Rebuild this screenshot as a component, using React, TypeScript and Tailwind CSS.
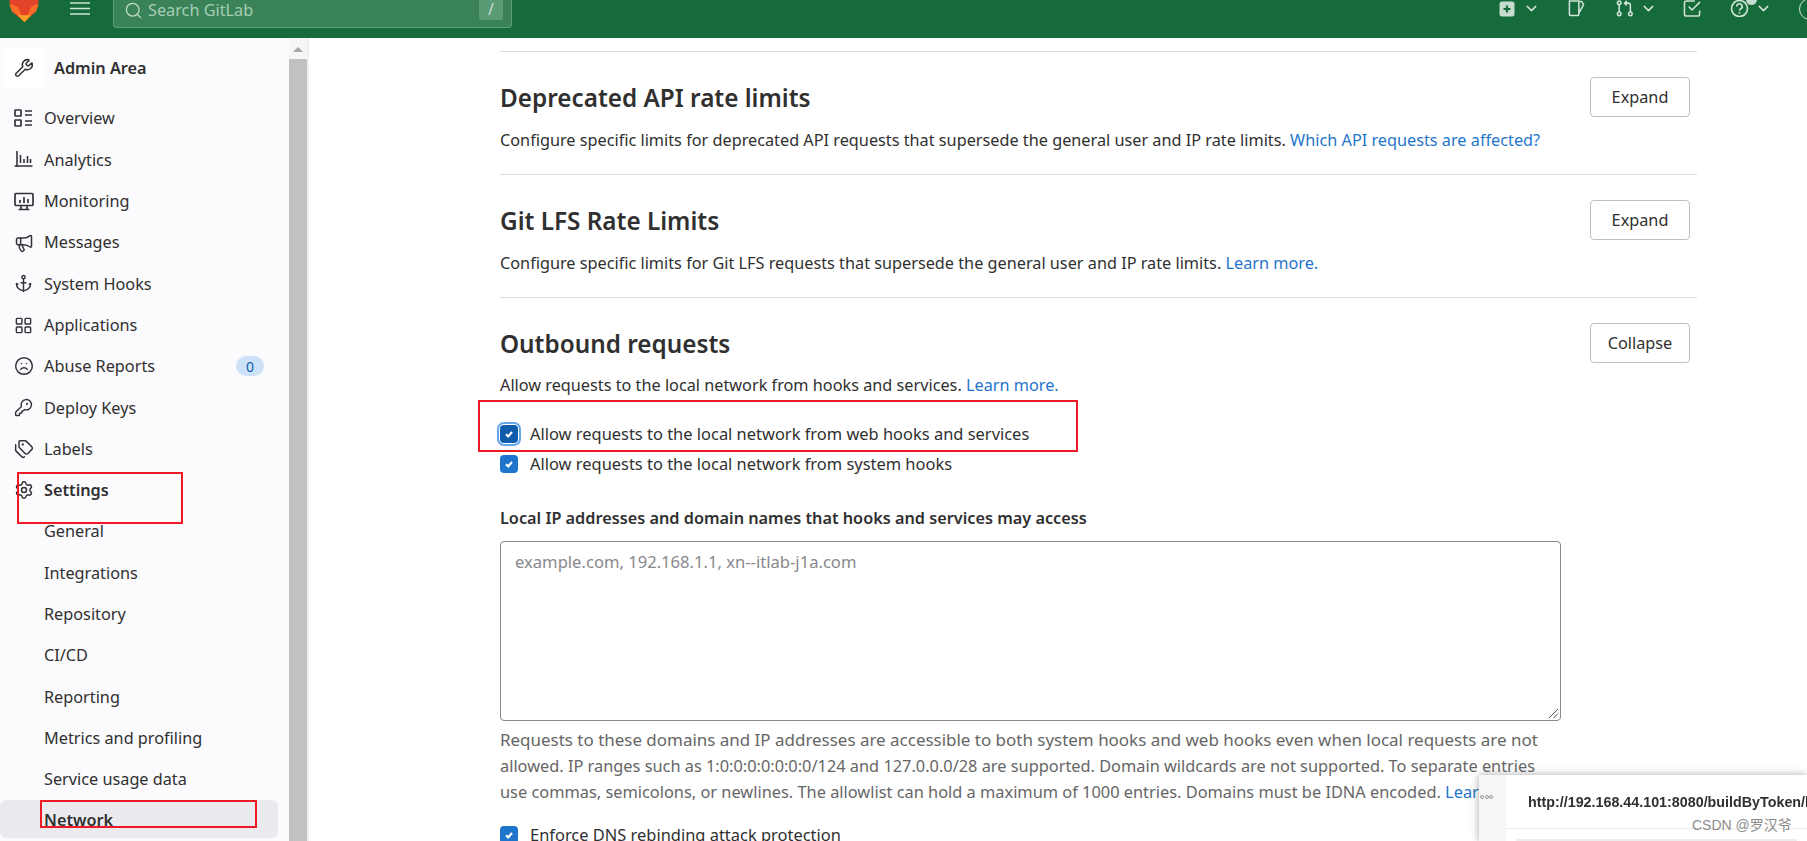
import { Anchor, ChevronDown, Frown, KeyRound, LayoutGrid, Megaphone, Search, Settings, Tags, Wrench } from "lucide-react";
import type { ReactNode } from "react";

function OverviewIcon() {
  return (
    <svg width="19" height="19" viewBox="0 0 19 19" fill="none" stroke="currentColor" strokeWidth="1.7">
      <rect x="1" y="1" width="6" height="6" rx="0.5" />
      <rect x="1" y="11" width="6" height="6" rx="0.5" />
      <path d="M11 2h7M11 6h7M11 12h7M11 16h7" />
    </svg>
  );
}

function AnalyticsIcon() {
  return (
    <svg width="19" height="19" viewBox="0 0 19 19" fill="none" stroke="currentColor" strokeWidth="1.6">
      <path d="M3 1v16M0.5 16h18M6.500 5v8M10 9v4M13.500 6v7M16.500 9v4" />
    </svg>
  );
}

function MonitoringIcon() {
  return (
    <svg width="20" height="19" viewBox="0 0 20 19" fill="none" stroke="currentColor" strokeWidth="1.7">
      <rect x="1" y="1.500" width="18" height="12" rx="1" />
      <path d="M6 8v3M10 5v6M14 7v4M7 14v3M13 14v3M4.500 17.500h11" />
    </svg>
  );
}

const mainNav: { label: string; icon: ReactNode }[] = [
  { label: "Overview", icon: <OverviewIcon /> },
  { label: "Analytics", icon: <AnalyticsIcon /> },
  { label: "Monitoring", icon: <MonitoringIcon /> },
  { label: "Messages", icon: <Megaphone size={20} strokeWidth={1.8} /> },
  { label: "System Hooks", icon: <Anchor size={19} strokeWidth={1.8} /> },
  { label: "Applications", icon: <LayoutGrid size={19} strokeWidth={1.8} /> },
  { label: "Abuse Reports", icon: <Frown size={20} strokeWidth={1.8} /> },
  { label: "Deploy Keys", icon: <KeyRound size={19} strokeWidth={1.8} /> },
  { label: "Labels", icon: <Tags size={20} strokeWidth={1.8} /> },
];

const settingsNav = ["General", "Integrations", "Repository", "CI/CD", "Reporting", "Metrics and profiling", "Service usage data"];

function NavRow({ label, icon, bold, badge }: { label: string; icon?: ReactNode; bold?: boolean; badge?: string }) {
  return (
    <div className="flex h-[41.3px] items-center pl-[14px] pr-[14px] text-[#303030]">
      <span className="flex w-[30px] shrink-0 text-[#333238]">{icon}</span>
      <span className={bold ? "font-semibold" : ""}>{label}</span>
      {badge && (
        <span className="ml-auto flex h-[20px] w-[28px] items-center justify-center rounded-full bg-[#cbe2f9] text-[14px] text-[#0b5cad]">
          {badge}
        </span>
      )}
    </div>
  );
}

function Section({ title, text, link, action }: { title: string; text: string; link: string; action: string }) {
  return (
    <div className="flex h-[123px] items-start justify-between border-t border-[#dcdcde] pr-[7px] pt-[25px]">
      <div>
        <h2 className="text-[24.3px] leading-[42px] font-semibold text-[#303030]">{title}</h2>
        <p className="mt-[8px] leading-[26px] text-[#303030]">
          {text} <a className="text-[#1f75cb]">{link}</a>
        </p>
      </div>
      <button className="h-[40px] w-[100px] rounded-[4px] border border-[#bfbfc3] bg-white text-[#303030]">{action}</button>
    </div>
  );
}

function Check({ label, focused }: { label: string; focused?: boolean }) {
  return (
    <label className="flex h-[30px] items-center gap-[12px] text-[16.45px] text-[#303030]">
      <span
        className={
          focused
            ? "flex h-[18px] w-[18px] items-center justify-center rounded-[4px] bg-[#0f5cad] ring-2 ring-[#63a6e9] ring-offset-1"
            : "flex h-[18px] w-[18px] items-center justify-center rounded-[4px] bg-[#1f75cb]"
        }
      >
        <svg width="10" height="10" viewBox="0 0 10 10" fill="none" stroke="white" strokeWidth="2.2">
          <path d="M2 5.200l2.200 2.200L8 3" />
        </svg>
      </span>
      {label}
    </label>
  );
}

function TopIcons() {
  return (
    <div className="ml-[987px] flex h-[17px] shrink-0 items-center self-start text-[#d1e4d8]">
      <svg width="16" height="16" viewBox="0 0 16 16" className="shrink-0">
        <rect x="0.500" y="0.500" width="15" height="15" rx="2.500" fill="#c5dccf" />
        <path d="M8 4.500v7M4.500 8h7" stroke="#166b3b" strokeWidth="2.200" />
      </svg>
      <ChevronDown size={17} strokeWidth={2} className="ml-[8px] shrink-0" />
      <svg width="19" height="17" viewBox="0 0 19 18" fill="none" stroke="currentColor" strokeWidth="1.6" className="ml-[27px] shrink-0">
        <path d="M2 1h10v14a1.500 1.500 0 0 1-1.500 1.500h-7A1.500 1.500 0 0 1 2 15zM12 1.500h3l2 3.500-5 9" />
      </svg>
      <svg width="18" height="17" viewBox="0 0 20 19" fill="none" stroke="currentColor" strokeWidth="1.7" className="ml-[30px] shrink-0">
        <circle cx="3.500" cy="3" r="2" />
        <circle cx="3.500" cy="15.500" r="2" />
        <circle cx="16" cy="15.500" r="2" />
        <path d="M3.500 5v8.500M16 13.500V6a2.500 2.500 0 0 0-2.500-2.500H10M12 1L9.500 3.500 12 6" />
      </svg>
      <ChevronDown size={17} strokeWidth={2} className="ml-[6px] shrink-0" />
      <svg width="19" height="17" viewBox="0 0 19 18" fill="none" stroke="currentColor" strokeWidth="1.6" className="ml-[26px] shrink-0">
        <path d="M12 1H3a2 2 0 0 0-2 2v12a2 2 0 0 0 2 2h12a2 2 0 0 0 2-2v-4M5.500 7l3.500 3.500L17.500 2" />
      </svg>
      <span className="relative ml-[27px] flex shrink-0">
        <svg width="21" height="17" viewBox="0 2 21 17" fill="none" stroke="currentColor" strokeWidth="1.6">
          <circle cx="10.500" cy="10.500" r="8" />
          <path d="M7.800 8.500a2.700 2.700 0 1 1 4 2.300c-.9.500-1.300 1-1.300 1.900M10.500 14v1.500" />
        </svg>
        <span className="absolute right-[-7px] top-[-6px] h-[11px] w-[11px] rounded-full bg-[#c5dccf]" />
      </span>
      <ChevronDown size={17} strokeWidth={2} className="ml-[5px] shrink-0" />
      <span className="ml-[27px] h-[22px] w-[22px] shrink-0 rounded-full border border-[#d1e4d8]" />
    </div>
  );
}

function Popup() {
  return (
    <div className="absolute bottom-0 left-[1479px] right-0 flex h-[66px] overflow-hidden bg-white shadow-[0_0_8px_rgba(0,0,0,0.35)]">
      <div className="w-[27px] bg-[#f6f6f6] pl-[1px] pt-[20px]">
        <div className="flex gap-[0.5px]">
          <span className="h-[4px] w-[4px] rounded-full border border-[#999]" />
          <span className="h-[4px] w-[4px] rounded-full border border-[#999]" />
          <span className="h-[4px] w-[4px] rounded-full border border-[#999]" />
        </div>
      </div>
      <div className="min-w-0 flex-1">
        <div className="h-[54px] overflow-hidden whitespace-nowrap border-b border-[#ededed] pl-[22px] pt-[17px] font-['Liberation_Sans',sans-serif] text-[14.3px] font-bold text-[#303030] blur-[0.4px]">
          http://192.168.44.101:8080/buildByToken/build
        </div>
        <div className="mx-[10px] mt-[10px] h-[6px] bg-[#ededed]" />
      </div>
      <span className="absolute left-[213px] top-[40px] font-['Liberation_Sans','Noto_Sans_CJK_SC',sans-serif] text-[14px] text-[#8c8c8c]">
        CSDN @罗汉爷
      </span>
    </div>
  );
}

export default function App() {
  return (
    <div className="relative flex h-[841px] w-[1807px] flex-col overflow-hidden bg-white font-['Noto_Sans',sans-serif] text-[16.25px]">
      <header className="flex h-[38px] shrink-0 overflow-hidden bg-[#166b3b] pl-[9px]">
        <svg width="31" height="23" viewBox="0 0 32 24" className="shrink-0">
          <path d="M0 0h31l-3 12-12 11L3 12z" fill="#e24329" />
          <path d="M0 4l3 8 6 4 7 7-7-16z" fill="#fc6d26" />
          <path d="M31 4l-3 8-6 4-6 7 7-16z" fill="#fc6d26" />
          <path d="M9 16h14l-7 7z" fill="#fca326" />
        </svg>
        <svg width="20" height="14" viewBox="0 0 20 14" className="ml-[30px] mt-[2px] shrink-0" stroke="#d1e4d8" strokeWidth="1.500">
          <path d="M0 1h20M0 6.500h20M0 12h20" />
        </svg>
        <div className="ml-[23px] flex h-[28px] w-[399px] shrink-0 items-center rounded-b-[4px] border border-t-0 border-[#5f9d7a] bg-[#3a8358] pb-[6px] pl-[10px] pr-[8px] text-[#a5cdb5]">
          <Search size={19} strokeWidth={1.6} className="mr-[5px] text-[#c3ddce]" />
          <span>Search GitLab</span>
          <span className="ml-auto mb-[3px] flex h-[22px] w-[24px] items-center justify-center rounded-b-[3px] bg-[#5a9a75] text-[16px] text-[#c3ddce]">/</span>
        </div>
        <TopIcons />
      </header>

      <div className="flex min-h-0 flex-1">
        <aside className="flex w-[289px] shrink-0 flex-col overflow-hidden bg-[#fbfafd] pr-[11px]">
          <div className="flex h-[60px] shrink-0 items-center pl-[4px] font-semibold text-[#303030]">
            <span className="mr-[10px] flex h-[40px] w-[40px] items-center justify-center rounded-[6px] bg-white text-[#333238]">
              <Wrench size={20} strokeWidth={1.8} />
            </span>
            Admin Area
          </div>
          <nav>
            {mainNav.map((item) => (
              <NavRow key={item.label} label={item.label} icon={item.icon} badge={item.label === "Abuse Reports" ? "0" : undefined} />
            ))}
            <NavRow label="Settings" icon={<Settings size={20} strokeWidth={1.8} />} bold />
            {settingsNav.map((label) => (
              <NavRow key={label} label={label} />
            ))}
            <div className="flex h-[38px] items-center rounded-[6px] bg-[#ebeaef] pl-[44px] pt-[3px] font-semibold text-[#303030]">Network</div>
          </nav>
        </aside>

        <div className="flex w-[20px] shrink-0 flex-col items-center border-r-2 border-[#f0f0f0] bg-[#f6f6f6]">
          <span className="mt-[9px] h-0 w-0 border-x-[5px] border-b-[5px] border-x-transparent border-b-[#a8a8a8]" />
          <span className="mt-[7px] w-full flex-1 bg-[#c1c1c1]" />
        </div>

        <main className="min-w-0 flex-1 pl-[191px] pr-[110px] pt-[13px]">
          <Section
            title="Deprecated API rate limits"
            text="Configure specific limits for deprecated API requests that supersede the general user and IP rate limits."
            link="Which API requests are affected?"
            action="Expand"
          />
          <Section
            title="Git LFS Rate Limits"
            text="Configure specific limits for Git LFS requests that supersede the general user and IP rate limits."
            link="Learn more."
            action="Expand"
          />
          <div className="flex items-start justify-between border-t border-[#dcdcde] pr-[7px] pt-[25px]">
            <div className="min-w-0">
              <h2 className="text-[24.3px] leading-[42px] font-semibold text-[#303030]">Outbound requests</h2>
              <p className="mt-[7px] leading-[26px] text-[#303030]">
                Allow requests to the local network from hooks and services. <a className="text-[#1f75cb]">Learn more.</a>
              </p>
              <div className="mt-[21px]">
                <Check label="Allow requests to the local network from web hooks and services" focused />
                <Check label="Allow requests to the local network from system hooks" />
              </div>
              <div className="mt-[26px] font-semibold leading-[26px] text-[#303030]">Local IP addresses and domain names that hooks and services may access</div>
              <div className="relative mt-[10px] h-[180px] w-[1061px] rounded-[4px] border border-[#89888d] pl-[14px] pt-[8px] text-[16.6px] text-[#89888d]">
                example.com, 192.168.1.1, xn--itlab-j1a.com
                <svg width="11" height="11" viewBox="0 0 11 11" className="absolute bottom-[1px] right-[1px]" stroke="#555" fill="none">
                  <path d="M1 10l9-9M5.500 10l4.500-4.500" />
                </svg>
              </div>
              <p className="mt-[6px] w-[1061px] whitespace-nowrap text-[16.97px] leading-[26px] text-[#666666]">
                <span className="block">Requests to these domains and IP addresses are accessible to both system hooks and web hooks even when local requests are not</span>
                <span className="block text-[16.35px]">allowed. IP ranges such as 1:0:0:0:0:0:0:0/124 and 127.0.0.0/28 are supported. Domain wildcards are not supported. To separate entries</span>
                <span className="block text-[16.37px]">
                  use commas, semicolons, or newlines. The allowlist can hold a maximum of 1000 entries. Domains must be IDNA encoded. <a className="text-[#1f75cb]">Learn more.</a>
                </span>
              </p>
              <div className="mt-[15px]">
                <Check label="Enforce DNS rebinding attack protection" />
              </div>
            </div>
            <button className="h-[40px] w-[100px] shrink-0 rounded-[4px] border border-[#bfbfc3] bg-white text-[#303030]">Collapse</button>
          </div>
        </main>
      </div>

      <span className="absolute left-[17px] top-[472px] h-[52px] w-[166px] border-2 border-[#ed1c24]" />
      <span className="absolute left-[40px] top-[800px] h-[28px] w-[217px] border-2 border-[#ed1c24]" />
      <span className="absolute left-[478px] top-[400px] h-[52px] w-[600px] border-2 border-[#ed1c24]" />
      <Popup />
    </div>
  );
}
